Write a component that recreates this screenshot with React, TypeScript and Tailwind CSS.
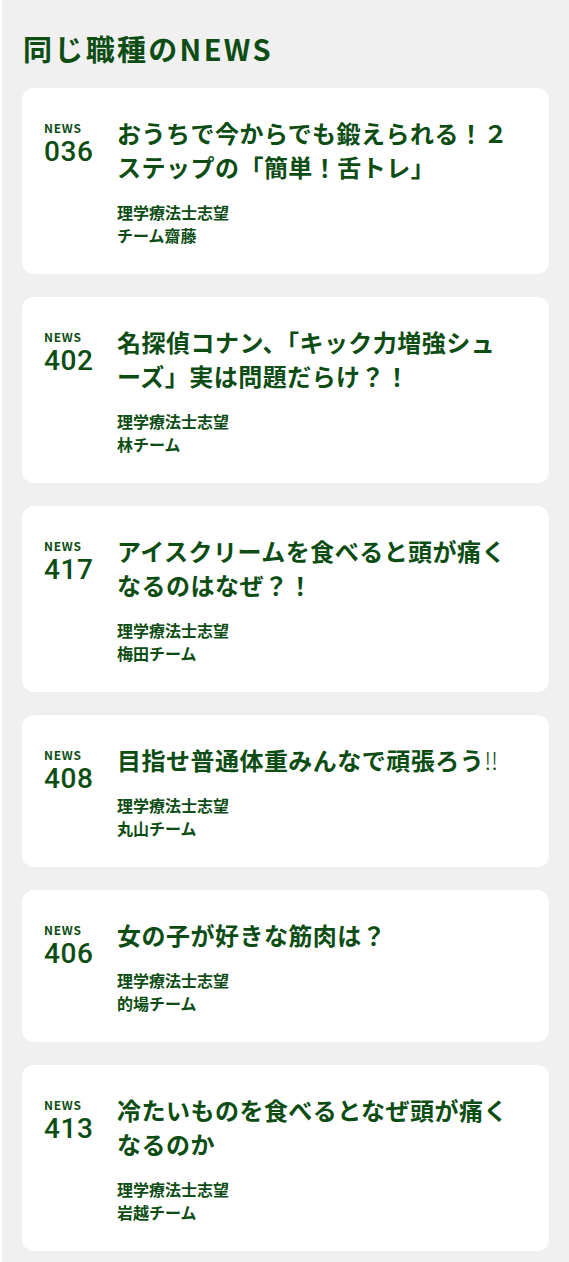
import React from "react"

type News = { no: string; title: string; tail?: string; role: string; team: string }

const items: News[] = [
  { no: "036", title: "おうちで今からでも鍛えられる！２ステップの「簡単！舌トレ」", role: "理学療法士志望", team: "チーム齋藤" },
  { no: "402", title: "名探偵コナン、「キック力増強シューズ」実は問題だらけ？！", role: "理学療法士志望", team: "林チーム" },
  { no: "417", title: "アイスクリームを食べると頭が痛くなるのはなぜ？！", role: "理学療法士志望", team: "梅田チーム" },
  { no: "408", title: "目指せ普通体重みんなで頑張ろう", tail: "‼", role: "理学療法士志望", team: "丸山チーム" },
  { no: "406", title: "女の子が好きな筋肉は？", role: "理学療法士志望", team: "的場チーム" },
  { no: "413", title: "冷たいものを食べるとなぜ頭が痛くなるのか", role: "理学療法士志望", team: "岩越チーム" },
]

const font = "font-['Noto_Sans_CJK_JP','Noto_Sans',sans-serif]"

export default function App() {
  return (
    <div className="bg-white pl-[2px] min-h-[1262px]">
      <div className={`bg-[#f0f0f0] min-h-[1262px] pl-5 pr-5 pt-[30px] pb-4 text-[#0d4d14] ${font}`}>
        <h2 className="text-[29px] font-bold leading-[36px] tracking-[0.08em] mb-[22px] pl-[1px]">同じ職種のNEWS</h2>
        <ul className="flex flex-col gap-[23px]">
          {items.map(n => (
            <li key={n.no} className="bg-white rounded-[12px] pl-[22px] pr-[30px] pt-[28px] pb-[27px] flex">
              <div className="w-[73px] shrink-0 pt-[5px]">
                <div className="text-[12px] font-bold leading-[14px] tracking-[0.06em]">NEWS</div>
                <div className="text-[28px] font-medium leading-[34px] tracking-[0.02em] font-['Roboto',sans-serif]">{n.no}</div>
              </div>
              <div className="flex-1">
                <h3 className="text-[24px] font-bold leading-[34px] tracking-[0.02em]">
                  {n.title}
                  {n.tail && <span className="font-light">{n.tail}</span>}
                </h3>
                <div className="mt-[17px] text-[16px] font-bold leading-[23px]">
                  <p>{n.role}</p>
                  <p>{n.team}</p>
                </div>
              </div>
            </li>
          ))}
        </ul>
      </div>
    </div>
  )
}
